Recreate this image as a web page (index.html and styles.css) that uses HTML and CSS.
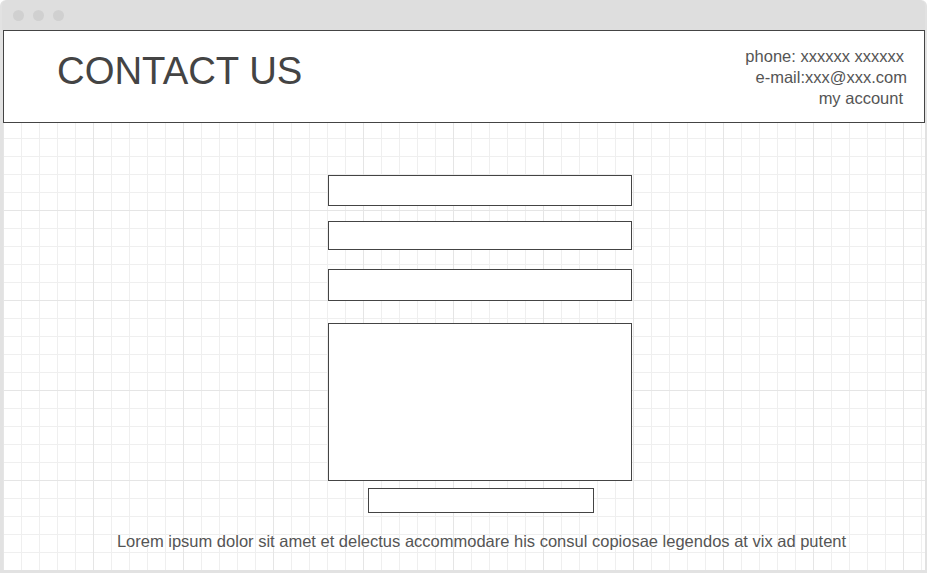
FILE: index.html
```html
<!DOCTYPE html>
<html lang="en">
<head>
    <meta charset="UTF-8">
    <meta name="viewport" content="width=device-width, initial-scale=1.0">
    <title>Contact Us</title>
    <link rel="stylesheet" href="styles.css">
</head>
<body>
    <div class="window">
        <div class="titlebar">
            <span class="dot"></span>
            <span class="dot"></span>
            <span class="dot"></span>
        </div>
        <div class="header">
            <h1 class="title">CONTACT US</h1>
            <div class="info">
                <div class="info-phone">phone: xxxxxx xxxxxx</div>
                <div class="info-mail">e-mail:xxx@xxx.com</div>
                <div class="info-account">my account</div>
            </div>
        </div>
        <div class="canvas">
            <form class="contact-form">
                <input type="text" class="field field-name">
                <input type="text" class="field field-mail">
                <input type="text" class="field field-subject">
                <textarea class="field field-message"></textarea>
                <button type="submit" class="send"></button>
            </form>
            <p class="note">Lorem ipsum dolor sit amet et delectus accommodare his consul copiosae legendos at vix ad putent</p>
        </div>
    </div>
</body>
</html>
```

FILE: styles.css
```css
body {
    margin: 0;
    background-color: white;
    font-family: "Liberation Sans", Arial, sans-serif;
    color: #555;
}
.window {
    width: 927px;
    height: 573px;
    box-sizing: border-box;
    background-color: #e2e2e2;
    border-radius: 6px 6px 0 0;
    padding: 0 2px 3px 3px;
    display: flex;
    flex-direction: column;
}
.titlebar {
    height: 30px;
    display: flex;
    align-items: center;
    gap: 9px;
    padding-left: 11px;
    background-color: #dedede;
    border-radius: 6px 6px 0 0;
    margin-left: -1px;
}
.dot {
    width: 11px;
    height: 11px;
    border-radius: 50%;
    background-color: #d0d0d0;
}
.header {
    height: 93px;
    box-sizing: border-box;
    background-color: white;
    border: 1px solid #444;
    display: flex;
    justify-content: space-between;
}
.title {
    margin: 0;
    padding: 21px 0 0 53px;
    font-size: 38.3px;
    font-weight: normal;
    line-height: 37px;
    color: #444;
}
.info {
    padding: 15px 17px 0 0;
    font-size: 16.5px;
    line-height: 21px;
    text-align: right;
}
.info-phone {
    padding-right: 3px;
}
.info-account {
    padding-right: 4px;
}
.canvas {
    flex: 1;
    background-color: white;
    background-image:
        linear-gradient(to right, #e5e5e5 1px, transparent 1px),
        linear-gradient(to bottom, #e5e5e5 1px, transparent 1px),
        linear-gradient(to right, #efefef 1px, transparent 1px),
        linear-gradient(to bottom, #efefef 1px, transparent 1px);
    background-size: 90px 90px, 90px 90px, 18px 18px, 18px 18px;
    background-position: 0 -3px;
    padding: 52px 0 0 32px;
    display: flex;
    flex-direction: column;
    align-items: center;
}
.contact-form {
    display: flex;
    flex-direction: column;
    align-items: center;
}
.field {
    display: block;
    width: 304px;
    box-sizing: border-box;
    margin: 0;
    padding: 0;
    border: 1px solid #444;
    background-color: white;
    resize: none;
}
.field-name {
    height: 31px;
}
.field-mail {
    height: 29px;
    margin-top: 15px;
}
.field-subject {
    height: 32px;
    margin-top: 19px;
}
.field-message {
    height: 158px;
    margin-top: 22px;
}
.send {
    width: 226px;
    height: 25px;
    margin: 7px 0 0 2px;
    padding: 0;
    border: 1px solid #444;
    background-color: white;
}
.note {
    margin: 19px 0 0 3px;
    font-size: 16.5px;
    line-height: 18px;
}
```
